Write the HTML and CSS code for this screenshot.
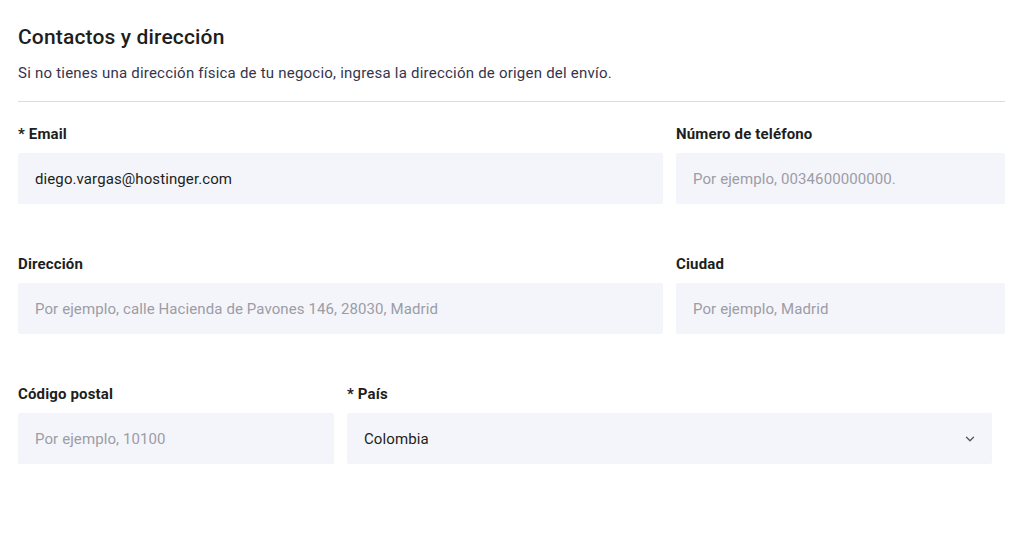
FILE: index.html
```html
<!DOCTYPE html>
<html lang="es">
<head>
<meta charset="utf-8">
<link rel="stylesheet" href="styles.css">
</head>
<body>
<div class="page">
  <h1 class="title">Contactos y dirección</h1>
  <p class="subtitle">Si no tienes una dirección física de tu negocio, ingresa la dirección de origen del envío.</p>
  <hr class="divider">
  <div class="row">
    <div class="field w-645">
      <label class="label">* Email</label>
      <div class="input">diego.vargas@hostinger.com</div>
    </div>
    <div class="field w-329">
      <label class="label">Número de teléfono</label>
      <div class="input placeholder">Por ejemplo, 0034600000000.</div>
    </div>
  </div>
  <div class="row">
    <div class="field w-645">
      <label class="label">Dirección</label>
      <div class="input placeholder">Por ejemplo, calle Hacienda de Pavones 146, 28030, Madrid</div>
    </div>
    <div class="field w-329">
      <label class="label">Ciudad</label>
      <div class="input placeholder">Por ejemplo, Madrid</div>
    </div>
  </div>
  <div class="row">
    <div class="field w-316">
      <label class="label">Código postal</label>
      <div class="input placeholder">Por ejemplo, 10100</div>
    </div>
    <div class="field w-645">
      <label class="label">* País</label>
      <div class="input select">
        <span>Colombia</span>
        <svg class="chevron" width="10" height="6" viewBox="0 0 10 6"><path d="M1.5 1.2l3.5 3.5 3.5-3.5" fill="none" stroke="#55555f" stroke-width="1.3" stroke-linecap="round" stroke-linejoin="round"/></svg>
      </div>
    </div>
  </div>
</div>
</body>
</html>
```
FILE: styles.css
```css
* { box-sizing: border-box; }
html, body { margin: 0; padding: 0; background: #fff; }
body { font-family: Roboto, "Noto Sans", "Liberation Sans", sans-serif; color: #1d1e20; }
.page { padding: 22px 19px 0 18px; width: 1024px; }
.title { margin: 0; font-size: 21px; font-weight: 500; line-height: 30px; letter-spacing: 0.15px; color: #1d1e20; }
.subtitle { margin: 11px 0 0; font-size: 15px; line-height: 20px; letter-spacing: 0.22px; color: #36344d; }
.divider { margin: 18px 0 0; border: 0; border-top: 1px solid #dadce0; height: 0; width: 987px; }
.row { display: flex; gap: 13px; margin-top: 22px; }
.row + .row { margin-top: 50px; }
.field { display: flex; flex-direction: column; }
.w-645 { width: 645px; }
.w-329 { width: 329px; }
.w-316 { width: 316px; }
.label { font-size: 15px; font-weight: 700; line-height: 20px; letter-spacing: 0.15px; color: #1d1e20; }
.input { margin-top: 9px; height: 51px; background: #f4f5fa; border-radius: 2px; padding: 0 17px; display: flex; align-items: center; font-size: 15px; letter-spacing: 0.1px; color: #1d1e20; }
.placeholder { color: #9c9ca6; }
.select { justify-content: space-between; padding-right: 17px; }
.chevron { display: block; }
```
